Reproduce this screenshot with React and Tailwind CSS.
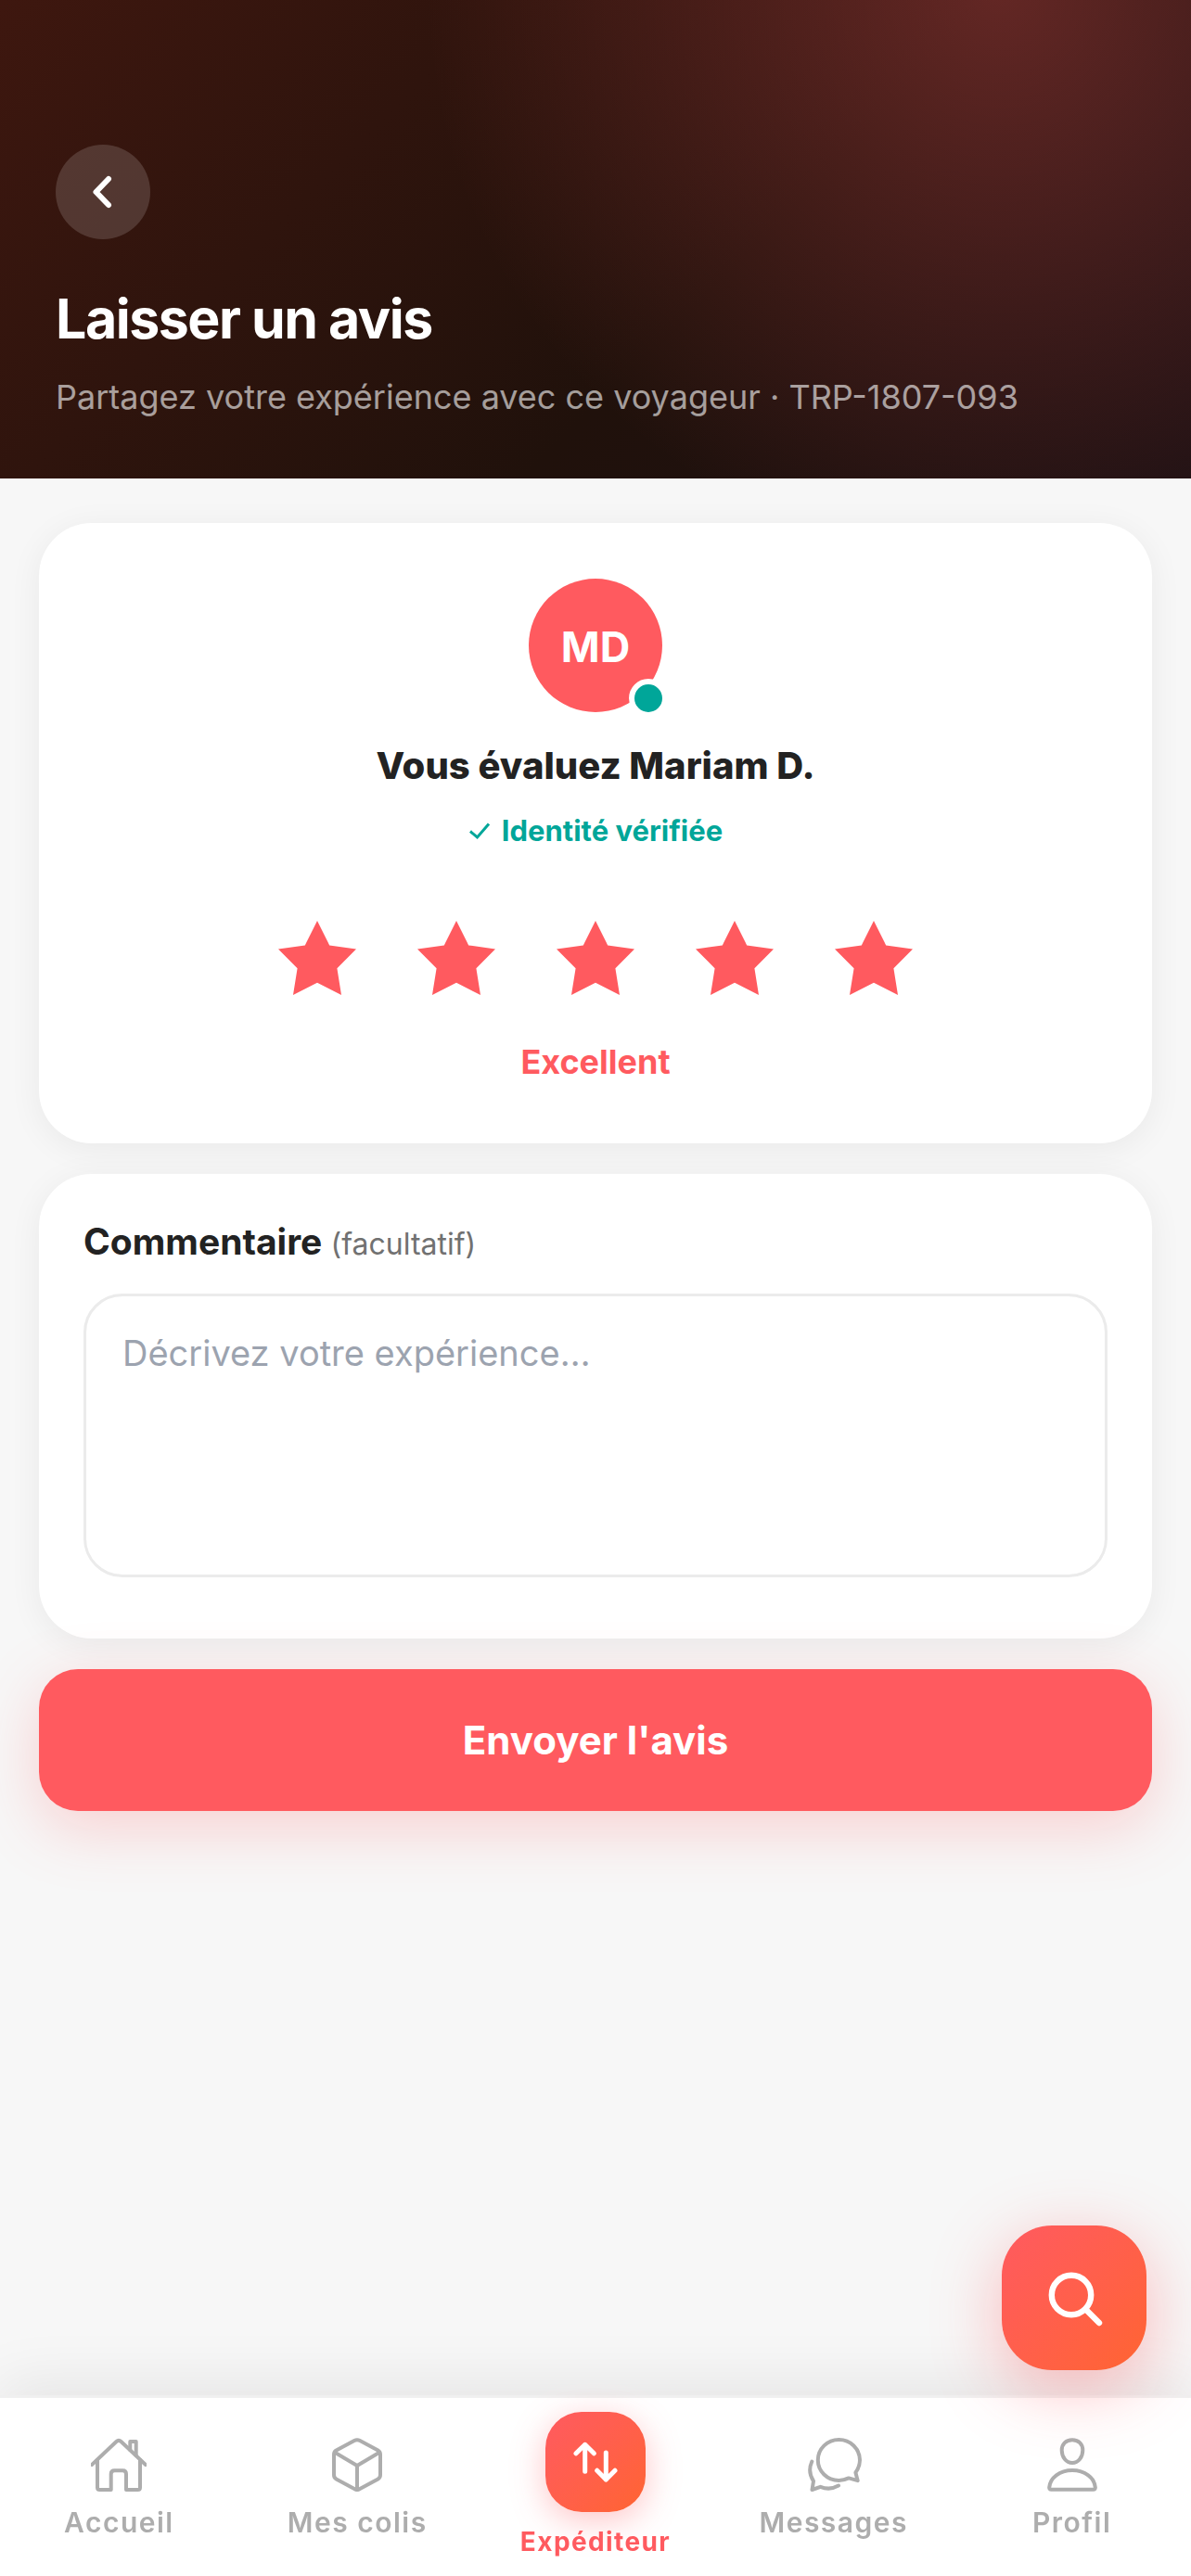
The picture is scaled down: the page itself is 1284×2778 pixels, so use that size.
import { useState } from "react";

const RATINGS = ["Décevant", "Moyen", "Bien", "Très bien", "Excellent"];

/* ── Icons ── */
const LineIcon = ({ children }) => (
  <svg
    viewBox="0 0 60 60"
    className="size-[60px]"
    fill="none"
    stroke="currentColor"
    strokeWidth="4"
    strokeLinecap="round"
    strokeLinejoin="round"
    aria-hidden="true"
  >
    {children}
  </svg>
);

const HomeIcon = () => (
  <LineIcon>
    <path d="M1 30 L27.5 5 Q30 2.6 32.5 5 L59 30" />
    <path d="M7 25 V54.5 Q7 57 9.5 57 H21.7 V40 Q21.7 36.2 25.5 36.2 H34.2 Q38 36.2 38 40 V57 H50.5 Q53 57 53 54.5 V25" />
    <path d="M42.3 14 V4.9 H48.7 V20" />
  </LineIcon>
);

const BoxIcon = () => (
  <LineIcon>
    <path d="M27 4 Q30 2.4 33 4 L52.5 14.6 Q55 16 55 19 V41 Q55 44 52.5 45.4 L33 56 Q30 57.8 27 56 L7.5 45.4 Q5 44 5 41 V19 Q5 16 7.5 14.6 Z" />
    <path d="M6 16.8 L30 31 L54 16.8 M30 31 V57" />
  </LineIcon>
);

const ChatIcon = () => (
  <LineIcon>
    <path d="M46 44.4 L55.7 47.2 L53.4 38.4 C56.5 34 58 30 58 25 A22.6 22 0 1 0 35.3 47 C39.5 47 43 45.8 46 44.4 Z" />
    <path d="M6.3 26.5 C3.4 33 3.6 41 8 47.6 L6.5 57 L15.5 53.8 C22 56.5 29 56 35 52.6" />
  </LineIcon>
);

const UserIcon = () => (
  <LineIcon>
    <path d="M30 3.2 C37 3.2 41.3 7.8 41.3 14.2 C41.3 22 36.5 28 30 28 C23.5 28 18.7 22 18.7 14.2 C18.7 7.8 23 3.2 30 3.2 Z" />
    <path d="M5.2 54.5 C6 44 16.5 36 30 36 C43.5 36 54 44 54.8 54.5 Q55 56.8 52.6 56.8 H7.4 Q5 56.8 5.2 54.5 Z" />
  </LineIcon>
);

const Star = () => (
  <svg viewBox="0 0 84 80" className="h-20 w-[84px]" fill="currentColor" aria-hidden="true">
    <path d="M42 0 L55.2 26.4 L84 30.4 L63.4 51.2 L68 80 L42 66.7 L16 80 L20.6 51.2 L0 30.4 L28.8 26.4 Z" />
  </svg>
);

const NavItem = ({ label, icon: Icon }) => (
  <a href="#" className="flex flex-col items-center gap-3 pt-[42px] text-[30px] leading-10 font-semibold tracking-wider text-[#adadad]">
    <Icon />
    {label}
  </a>
);

export default function App() {
  const [rating, setRating] = useState(5);

  return (
    <div className="min-h-screen bg-[#f7f7f7] pb-[200px] font-['Inter',sans-serif] text-[#222222]">
      <header className="bg-[radial-gradient(circle_620px_at_84%_-2%,rgba(255,90,95,0.3),transparent),linear-gradient(135deg,#3e170f_0%,#20110b_60%,#1e1113_100%)] px-[60px] pt-[156px] pb-16">
        <button type="button" aria-label="Retour" className="flex size-[102px] items-center justify-center rounded-full bg-white/15">
          <svg viewBox="0 0 42 42" className="size-[42px]" fill="none" stroke="#fff" strokeWidth="6" strokeLinecap="round" strokeLinejoin="round" aria-hidden="true">
            <path d="M27 7 L13.5 21 L27 35" />
          </svg>
        </button>
        <h1 className="mt-[50px] text-[59px] leading-[72px] font-bold tracking-tight text-white">Laisser un avis</h1>
        <p className="mt-6 text-[36px] leading-[48px] text-white/60">
          Partagez votre expérience avec ce voyageur · TRP-1807-093
        </p>
      </header>

      <main className="flex flex-col gap-[33px] px-[42px] pt-12">
        {/* Rating */}
        <section className="flex flex-col items-center rounded-[57px] bg-white pt-[60px] pb-16 shadow-[0_6px_36px_rgba(0,0,0,0.06)]">
          <div className="relative flex size-36 items-center justify-center rounded-full bg-[#ff5a5f] pt-1 text-[45px] leading-[54px] font-bold text-white">
            MD
            <span className="absolute -right-1.5 -bottom-1.5 size-[42px] rounded-full border-6 border-white bg-[#00a699]" />
          </div>
          <h2 className="mt-[31px] text-[40px] leading-[54px] font-extrabold">Vous évaluez Mariam D.</h2>
          <p className="mt-[22px] flex items-center gap-3 text-[31px] leading-[42px] font-bold text-[#00a699]">
            <svg viewBox="0 0 24 20" className="h-5 w-6" fill="none" stroke="currentColor" strokeWidth="3" aria-hidden="true">
              <path d="M2 10.5 L9.5 17 L22 2.5" />
            </svg>
            Identité vérifiée
          </p>
          <div className="mt-[76px] flex gap-[66px]">
            {RATINGS.map((label, i) => (
              <button
                key={label}
                type="button"
                aria-label={label}
                onClick={() => setRating(i + 1)}
                className={i < rating ? "text-[#ff5a5f]" : "text-[#ebebeb]"}
              >
                <Star />
              </button>
            ))}
          </div>
          <p className="mt-12 text-[36px] leading-[48px] font-bold text-[#ff5a5f]">{RATINGS[rating - 1]}</p>
        </section>

        {/* Comment */}
        <section className="rounded-[57px] bg-white px-12 pt-[46px] pb-[66px] shadow-[0_6px_36px_rgba(0,0,0,0.06)]">
          <label htmlFor="comment" className="block text-[39px] leading-[54px] font-bold">
            Commentaire <span className="text-[32px] font-normal text-[#717171]">(facultatif)</span>
          </label>
          <textarea
            id="comment"
            placeholder="Décrivez votre expérience…"
            className="mt-[26px] block h-[306px] w-full resize-none rounded-[42px] border-3 border-[#ebebeb] px-[39px] py-[34px] text-[38px] leading-[54px] outline-none placeholder:text-[#9ca3af]"
          />
        </section>

        <button
          type="button"
          className="h-[153px] rounded-[42px] bg-[#ff5a5f] text-[42px] leading-[54px] font-bold text-white shadow-[0_18px_66px_rgba(255,90,95,0.25)]"
        >
          Envoyer l'avis
        </button>
      </main>

      {/* Bottom nav */}
      <nav className="fixed inset-x-0 bottom-0 grid h-[195px] grid-cols-5 border-t-3 border-[#f0f0f0] bg-white shadow-[0_-12px_60px_rgba(0,0,0,0.08)]">
        <NavItem label="Accueil" icon={HomeIcon} />
        <NavItem label="Mes colis" icon={BoxIcon} />
        <a href="#" aria-current="page" className="flex flex-col items-center gap-3 pt-[15px] text-[28px] leading-10 font-bold tracking-wider text-[#ff5a5f]">
          <span className="flex size-[108px] items-center justify-center rounded-[39px] bg-linear-135 from-[#ff5a5f] to-[#ff6430] shadow-[0_9px_36px_rgba(255,90,95,0.35)]">
            <svg viewBox="0 0 48 48" className="size-12" fill="none" stroke="#fff" strokeWidth="5" strokeLinecap="round" strokeLinejoin="round" aria-hidden="true">
              <path d="M12.7 34.3 V5.3 M3 14.8 L12.7 5.3 L22.3 14.8" />
              <path d="M35.3 14 V43 M25.7 33.2 L35.3 43 L45 33.2" />
            </svg>
          </span>
          Expéditeur
        </a>
        <NavItem label="Messages" icon={ChatIcon} />
        <NavItem label="Profil" icon={UserIcon} />
      </nav>

      <button
        type="button"
        aria-label="Rechercher"
        className="fixed right-12 bottom-[222px] flex size-[156px] items-center justify-center rounded-[54px] bg-linear-135 from-[#ff5a5f] to-[#ff6430] shadow-[0_18px_72px_rgba(255,90,95,0.4)]"
      >
        <svg viewBox="0 0 66 66" className="size-[66px]" fill="none" stroke="#fff" strokeWidth="6.4" strokeLinecap="round" aria-hidden="true">
          <circle cx="30" cy="30" r="21.2" />
          <path d="M46 46 L60 60" />
        </svg>
      </button>
    </div>
  );
}
